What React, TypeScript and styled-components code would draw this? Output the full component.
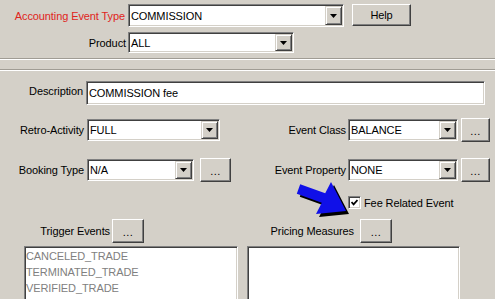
import React from "react";
import styled, { createGlobalStyle } from "styled-components";

const Global = createGlobalStyle`
  html, body { margin: 0; padding: 0; background: #d4d0c8; }
  body {
    font-family: "Liberation Sans", Arial, sans-serif;
    font-size: 11px;
    letter-spacing: -0.1px;
    color: #000;
  }
`;

const Window = styled.div`
  position: relative;
  width: 495px;
  height: 299px;
  overflow: hidden;
  background: #d4d0c8;
`;

const TopPanel = styled.div`
  padding-top: 4px;
`;

const FormPanel = styled.div`
  padding-top: 11px;
`;

const Divider = styled.div`
  margin-top: 5px;
  height: 10px;
  border-top: 1px solid #a09c94;
  border-bottom: 1px solid #a09c94;
  box-shadow: inset 0 1px 0 #ffffff, 0 1px 0 #ffffff;
`;

const Row = styled.div<{ $mt?: number; $h: number; $pl?: number }>`
  display: flex;
  align-items: flex-start;
  height: ${(p) => p.$h}px;
  margin-top: ${(p) => p.$mt ?? 0}px;
  padding-left: ${(p) => p.$pl ?? 0}px;
`;

const Half = styled.div<{ $w?: number }>`
  display: flex;
  align-items: flex-start;
  height: 100%;
  width: ${(p) => (p.$w ? `${p.$w}px` : "auto")};
  flex: ${(p) => (p.$w ? "none" : "1")};
`;

const Label = styled.div<{ $w: number; $gap?: number; $red?: boolean; $pb?: number }>`
  flex: none;
  width: ${(p) => p.$w}px;
  margin-right: ${(p) => p.$gap ?? 2}px;
  align-self: stretch;
  display: flex;
  align-items: center;
  justify-content: flex-end;
  padding-bottom: ${(p) => p.$pb ?? 0}px;
  box-sizing: border-box;
  white-space: nowrap;
  color: ${(p) => (p.$red ? "#e02420" : "#000")};
`;

const Sunken = styled.div<{ $w: number; $h: number; $mt?: number; $ml?: number }>`
  flex: none;
  box-sizing: border-box;
  width: ${(p) => p.$w}px;
  height: ${(p) => p.$h}px;
  margin-top: ${(p) => p.$mt ?? 0}px;
  margin-left: ${(p) => p.$ml ?? 0}px;
  display: flex;
  background: #ffffff;
  border: 1px solid;
  border-color: #808080 #ffffff #ffffff #808080;
  box-shadow: inset 1px 1px 0 #404040, inset -1px -1px 0 #d4d0c8;
  padding: 1px;
`;

const FieldValue = styled.div`
  flex: 1;
  display: flex;
  align-items: center;
  padding-left: 1px;
  white-space: nowrap;
  overflow: hidden;
`;

const DropButton = styled.div`
  flex: none;
  width: 17px;
  box-sizing: border-box;
  background: #d4d0c8;
  border: 1px solid;
  border-color: #d4d0c8 #404040 #404040 #d4d0c8;
  box-shadow: inset 1px 1px 0 #ffffff, inset -1px -1px 0 #808080;
  display: flex;
  align-items: center;
  justify-content: center;
`;

const Button = styled.div<{ $w: number; $h: number; $ml?: number; $mt?: number }>`
  flex: none;
  box-sizing: border-box;
  width: ${(p) => p.$w}px;
  height: ${(p) => p.$h}px;
  margin-left: ${(p) => p.$ml ?? 0}px;
  margin-top: ${(p) => p.$mt ?? 0}px;
  background: #d4d0c8;
  border: 1px solid;
  border-color: #ffffff #404040 #404040 #ffffff;
  box-shadow: inset -1px -1px 0 #808080;
  display: flex;
  align-items: center;
  justify-content: center;
  white-space: nowrap;
`;

const Dots = styled.span`
  padding-top: 2px;
  letter-spacing: 0.5px;
`;

const CheckBox = styled.div`
  flex: none;
  box-sizing: border-box;
  width: 13px;
  height: 13px;
  background: #ffffff;
  border: 1px solid;
  border-color: #808080 #ffffff #ffffff #808080;
  box-shadow: inset 1px 1px 0 #404040, inset -1px -1px 0 #d4d0c8;
  display: flex;
  align-items: center;
  justify-content: center;
`;

const CheckLabel = styled.div`
  margin-left: 3px;
  height: 13px;
  display: flex;
  align-items: center;
  white-space: nowrap;
`;

const ListBox = styled.div<{ $w: number; $ml?: number }>`
  flex: none;
  box-sizing: border-box;
  width: ${(p) => p.$w}px;
  height: 70px;
  margin-left: ${(p) => p.$ml ?? 0}px;
  background: #ffffff;
  border: 1px solid;
  border-color: #808080 #ffffff #ffffff #808080;
  box-shadow: inset 1px 1px 0 #404040, inset -1px -1px 0 #d4d0c8;
  padding: 1px;
`;

const ListItem = styled.div`
  height: 16px;
  line-height: 16px;
  color: #808080;
  white-space: nowrap;
`;

const ArrowMark = styled.svg`
  position: absolute;
  left: 292px;
  top: 178px;
`;

const Tri = () => (
  <svg width="7" height="4" viewBox="0 0 7 4">
    <polygon points="0,0 7,0 3.5,4" fill="#000" />
  </svg>
);

const Combo = ({ w, h, value, mt, ml }: { w: number; h: number; value: string; mt?: number; ml?: number }) => (
  <Sunken $w={w} $h={h} $mt={mt} $ml={ml}>
    <FieldValue>{value}</FieldValue>
    <DropButton>
      <Tri />
    </DropButton>
  </Sunken>
);

const MoreButton = ({ w, ml, mt }: { w: number; ml?: number; mt?: number }) => (
  <Button $w={w} $h={24} $ml={ml} $mt={mt}>
    <Dots>...</Dots>
  </Button>
);

const ARROW = "8.2,6.3 33.2,15.3 39,4 54,33 24,36 29.8,24.7 4.8,15.7";

export default function App() {
  return (
    <Window>
      <Global />
      <TopPanel>
        <Row $h={23}>
          <Label $w={125} $gap={3} $red>
            Accounting Event Type
          </Label>
          <Combo w={216} h={23} value="COMMISSION" />
          <Button $w={59} $h={22} $ml={8}>
            Help
          </Button>
        </Row>
        <Row $h={21} $mt={5}>
          <Label $w={126} $gap={2}>
            Product
          </Label>
          <Combo w={166} h={21} value="ALL" />
        </Row>
      </TopPanel>
      <Divider />
      <FormPanel>
        <Row $h={24}>
          <Label $w={83} $gap={3} $pb={4}>
            Description
          </Label>
          <Sunken $w={399} $h={24}>
            <FieldValue>COMMISSION fee</FieldValue>
          </Sunken>
        </Row>
        <Row $h={24} $mt={13}>
          <Half $w={240}>
            <Label $w={84} $gap={3}>
              Retro-Activity
            </Label>
            <Combo w={133} h={22} mt={1} value="FULL" />
          </Half>
          <Half>
            <Label $w={106} $gap={2}>
              Event Class
            </Label>
            <Combo w={110} h={22} mt={1} value="BALANCE" />
            <MoreButton w={29} ml={3} />
          </Half>
        </Row>
        <Row $h={24} $mt={16}>
          <Half $w={240}>
            <Label $w={84} $gap={3}>
              Booking Type
            </Label>
            <Combo w={107} h={22} mt={1} value="N/A" />
            <MoreButton w={31} ml={6} />
          </Half>
          <Half>
            <Label $w={106} $gap={2}>
              Event Property
            </Label>
            <Combo w={110} h={22} mt={1} value="NONE" />
            <MoreButton w={29} ml={3} />
          </Half>
        </Row>
        <Row $h={13} $mt={14} $pl={348}>
          <CheckBox>
            <svg width="7" height="7" viewBox="0 0 7 7">
              <polyline points="0.5,3 2.6,5.3 6.5,1" fill="none" stroke="#000" strokeWidth="1.8" />
            </svg>
          </CheckBox>
          <CheckLabel>Fee Related Event</CheckLabel>
        </Row>
        <Row $h={24} $mt={10}>
          <Half $w={240}>
            <Label $w={110} $gap={2}>
              Trigger Events
            </Label>
            <MoreButton w={32} />
          </Half>
          <Half>
            <Label $w={114} $gap={6}>
              Pricing Measures
            </Label>
            <MoreButton w={32} />
          </Half>
        </Row>
        <Row $h={70} $mt={3} $pl={24}>
          <ListBox $w={214}>
            <ListItem>CANCELED_TRADE</ListItem>
            <ListItem>TERMINATED_TRADE</ListItem>
            <ListItem>VERIFIED_TRADE</ListItem>
          </ListBox>
          <ListBox $w={213} $ml={9} />
        </Row>
      </FormPanel>
      <ArrowMark width="62" height="42" viewBox="0 0 62 42">
        <polygon transform="translate(3 3)" points={ARROW} fill="#000" />
        <polygon points={ARROW} fill="#1010e8" />
      </ArrowMark>
    </Window>
  );
}
